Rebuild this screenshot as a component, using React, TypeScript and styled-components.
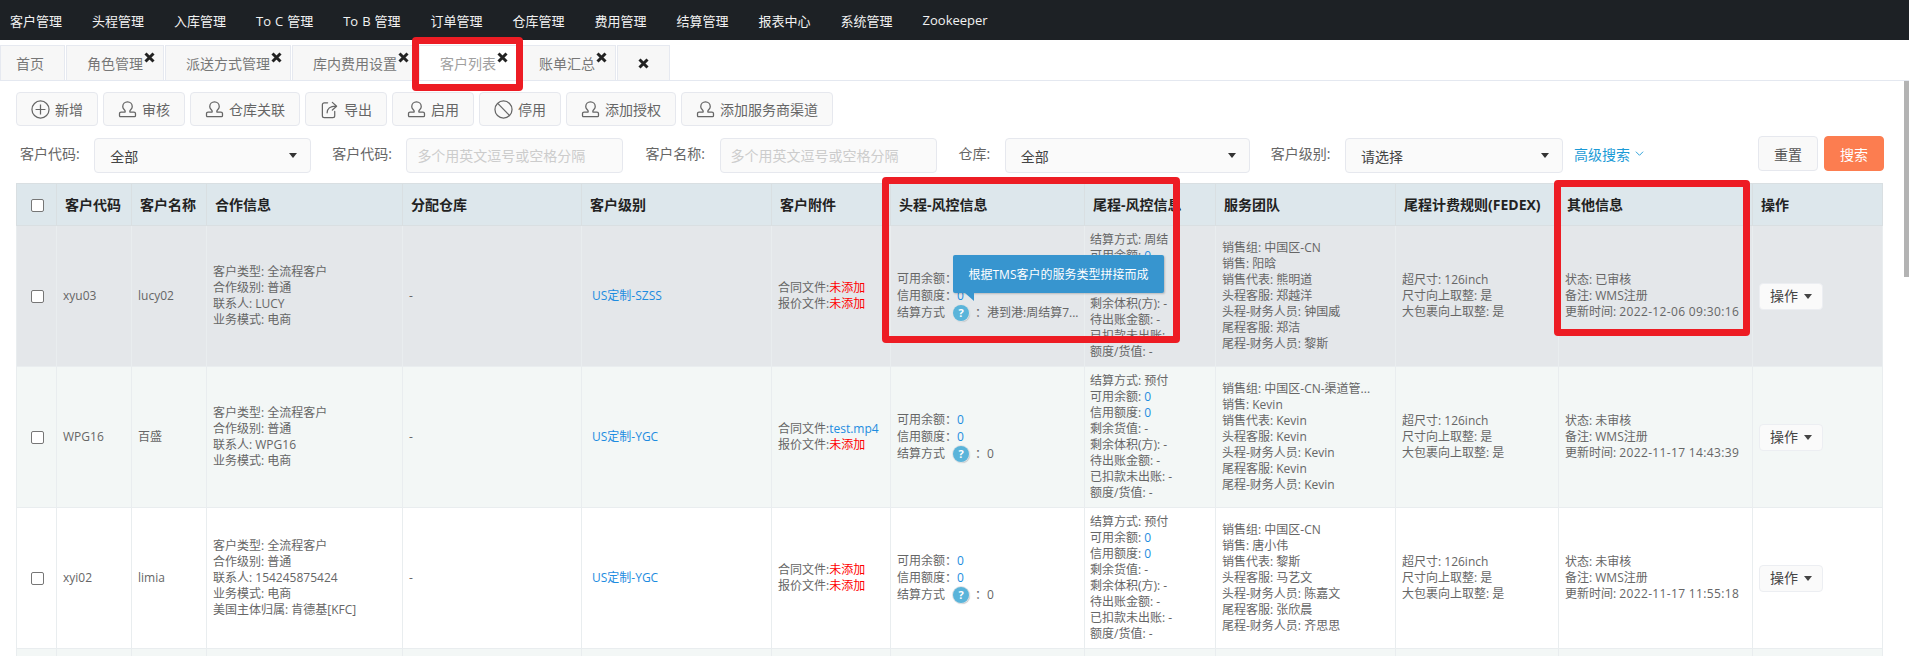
import React from "react";
import styled, { createGlobalStyle } from "styled-components";

const Global = createGlobalStyle`
  html, body { margin: 0; padding: 0; background: #fff; overflow: hidden; }
  body { font-family: "Open Sans", "Noto Sans CJK SC", sans-serif; color: #666; }
  * { box-sizing: border-box; }
`;

const Page = styled.div`
  position: relative;
  width: 1909px;
  height: 656px;
  overflow: hidden;
`;

const TopBar = styled.nav`
  display: flex;
  align-items: center;
  gap: 30px;
  height: 40px;
  padding-left: 10px;
  background: #1d2125;
`;
const NavItem = styled.span`
  font-size: 13px;
  word-spacing: 0.6px;
  color: #f2f2f2;
  white-space: nowrap;
`;

const TabBar = styled.div`
  display: flex;
  gap: 1px;
  height: 41px;
  padding-top: 5px;
  border-bottom: 1px solid #e4e8f0;
`;
const Tab = styled.div<{ $active?: boolean; $first?: boolean; $blank?: boolean }>`
  position: relative;
  display: flex;
  align-items: center;
  justify-content: center;
  height: 35px;
  padding: ${(p) => (p.$first ? "0 20px 0 15px" : "0 20px")};
  width: ${(p) => (p.$blank ? "53px" : "auto")};
  font-size: 14px;
  color: ${(p) => (p.$active ? "#a0a0a0" : "#777")};
  background: ${(p) => (p.$active ? "#fff" : "#f7f7f7")};
  border: 1px solid #e6e9f0;
  border-bottom: 0;
  white-space: nowrap;
`;
const TabClose = styled.svg<{ $inline?: boolean }>`
  width: 11px;
  height: 11px;
  ${(p) => (p.$inline ? "" : "position: absolute; top: 6px; right: 8px;")}
`;

const Toolbar = styled.div`
  display: flex;
  gap: 5px;
  margin: 11px 0 0 16px;
`;
const ToolButton = styled.button`
  display: flex;
  align-items: center;
  gap: 5px;
  height: 34px;
  padding: 0 14px;
  font: inherit;
  font-size: 14px;
  color: #666;
  background: #f9f9f9;
  border: 1px solid #e6e8ee;
  border-radius: 4px;
  white-space: nowrap;
  svg { width: 19px; height: 19px; color: #666; flex: none; }
`;

const FilterRow = styled.div`
  display: flex;
  align-items: flex-start;
  height: 37px;
  margin: 10px 25px 0 20px;
`;
const FilterLabel = styled.label`
  height: 35px;
  margin: 2px 14.5px 0 0;
  font-size: 14px;
  line-height: 32px;
  color: #666;
  white-space: nowrap;
`;
const SelectBox = styled.div<{ $w: number }>`
  display: flex;
  align-items: center;
  justify-content: space-between;
  width: ${(p) => p.$w}px;
  height: 35px;
  margin: 2px 21px 0 0;
  padding: 0 13px 0 15px;
  font-size: 14px;
  color: #444;
  background: #fafafa;
  border: 1px solid #e6e8ee;
  border-radius: 4px;
`;
const Caret = styled.i`
  display: inline-block;
  width: 0;
  height: 0;
  border-left: 4px solid transparent;
  border-right: 4px solid transparent;
  border-top: 5px solid #333;
`;
const TextInput = styled.input`
  width: 217px;
  height: 35px;
  margin: 2px 22px 0 0;
  padding: 0 10px;
  font: inherit;
  font-size: 14px;
  background: #fafafa;
  border: 1px solid #e6e8ee;
  border-radius: 4px;
  &::placeholder { color: #ccc; opacity: 1; }
`;
const AdvancedLink = styled.a`
  display: flex;
  align-items: center;
  gap: 5px;
  height: 35px;
  margin: 0 0 0 -10px;
  font-size: 14px;
  color: #1b9ad6;
  white-space: nowrap;
  svg { width: 9px; height: 9px; }
`;
const ActionGroup = styled.div`
  display: flex;
  gap: 6px;
  margin-left: auto;
`;
const ActionButton = styled.button<{ $primary?: boolean }>`
  width: 60px;
  height: 35px;
  padding: 0;
  font: inherit;
  font-size: 14px;
  color: ${(p) => (p.$primary ? "#fff" : "#555")};
  background: ${(p) => (p.$primary ? "#fc7d50" : "#f9f9f9")};
  border: 1px solid ${(p) => (p.$primary ? "#fc7d50" : "#e6e8ee")};
  border-radius: 4px;
`;

const Grid = styled.table`
  width: 1866px;
  margin: 10px 0 0 16px;
  table-layout: fixed;
  border-collapse: collapse;
  font-size: 12px;
  line-height: 16px;
`;
const HeadCell = styled.th<{ $center?: boolean }>`
  height: 42px;
  padding: ${(p) => (p.$center ? "0" : "0 8px")};
  font-size: 14px;
  font-weight: 700;
  text-align: ${(p) => (p.$center ? "center" : "left")};
  color: #222;
  background: #dde7ec;
  border: 1px solid #d9dfe2;
  white-space: nowrap;
`;
const BodyRow = styled.tr<{ $bg: string }>`
  height: 141px;
  background: ${(p) => p.$bg};
`;
const BodyCell = styled.td<{ $pad?: number }>`
  padding: 0 0 0 ${(p) => p.$pad ?? 6}px;
  color: #666;
  border: 1px solid #e9edef;
  vertical-align: middle;
  white-space: nowrap;
  overflow: hidden;
`;
const CenterCell = styled(BodyCell)`
  padding: 0;
  text-align: center;
`;
const Check = styled.input.attrs({ type: "checkbox" })`
  appearance: none;
  display: inline-block;
  width: 13px;
  height: 13px;
  margin: 0 0 0 1px;
  background: #fff;
  border: 1px solid #767676;
  border-radius: 2px;
  vertical-align: middle;
`;
const Line = styled.div``;
const RiskLine = styled.div`
  display: flex;
  align-items: center;
  height: 16.6px;
`;
const Blue = styled.span`
  color: #1d8ce0;
`;
const Red = styled.span`
  color: #f00;
`;
const DateText = styled.span`
  letter-spacing: 0.35px;
`;
const Help = styled.span`
  display: inline-flex;
  align-items: center;
  justify-content: center;
  width: 16px;
  height: 16px;
  margin: 0 6px 0 8px;
  font-size: 11px;
  font-weight: 700;
  color: #fff;
  background: #5ab4da;
  border-radius: 50%;
  box-shadow: 0 0 0 1px #dfe3e6, 1px 1px 1px #b5b9bc;
`;
const OpButton = styled.button`
  display: inline-flex;
  align-items: center;
  gap: 6px;
  height: 27px;
  padding: 0 10px;
  font: inherit;
  font-size: 14px;
  color: #444;
  background: #fafafa;
  border: 1px solid #eceef2;
  border-radius: 4px;
  ${Caret} { border-top-color: #444; }
`;

const Tooltip = styled.div`
  position: absolute;
  left: 953px;
  top: 255px;
  width: 211px;
  height: 38px;
  font-size: 12px;
  line-height: 39px;
  text-align: center;
  color: #fff;
  background: #3795cf;
  border-radius: 2px;
  box-shadow: 1px 1px 2px rgba(0, 0, 0, 0.2);
  white-space: nowrap;
  &::after {
    content: "";
    position: absolute;
    left: 12px;
    top: 38px;
    border-top: 8px solid #3795cf;
    border-left: 9px solid transparent;
  }
`;
const Highlight = styled.div<{ $l: number; $t: number; $w: number; $h: number }>`
  position: absolute;
  left: ${(p) => p.$l}px;
  top: ${(p) => p.$t}px;
  width: ${(p) => p.$w}px;
  height: ${(p) => p.$h}px;
  border: 7px solid #ed1c24;
  border-radius: 4px;
`;
const ScrollThumb = styled.div`
  position: absolute;
  right: 0;
  top: 81px;
  width: 5px;
  height: 196px;
  background: #b3b3b3;
`;

const Stamp = () => (
  <svg viewBox="0 0 20 20" fill="none" stroke="currentColor" strokeWidth="1.35" strokeLinejoin="round">
    <path d="M7.5 12.7V11.5C7.5 10.5 5 9.5 5 7A5 5 0 0 1 15 7C15 9.5 12.5 10.5 12.5 11.5V12.7H16.8A1.6 1.6 0 0 1 18.4 14.3V16.6A1 1 0 0 1 17.4 17.6H2.6A1 1 0 0 1 1.6 16.6V14.3A1.6 1.6 0 0 1 3.2 12.7Z" />
  </svg>
);
const PlusCircle = () => (
  <svg viewBox="0 0 20 20" fill="none" stroke="currentColor" strokeWidth="1.3">
    <circle cx="10" cy="10" r="9" />
    <path d="M4.8 10H15.2M10 4.8V15.2" />
  </svg>
);
const BanCircle = () => (
  <svg viewBox="0 0 20 20" fill="none" stroke="currentColor" strokeWidth="1.3">
    <circle cx="10" cy="10" r="9" />
    <path d="M4.2 3.8L16.2 16.2" />
  </svg>
);
const ExportIcon = () => (
  <svg viewBox="0 0 20 20" fill="none" stroke="currentColor" strokeWidth="1.3" strokeLinecap="round" strokeLinejoin="round">
    <path d="M8 3H4.5A2 2 0 0 0 2.5 5V16.5A2 2 0 0 0 4.5 18.5H13.5A2 2 0 0 0 15.5 16.5V12" />
    <path d="M7.5 13.5C7.5 9.5 10.5 6.5 16.5 6.5M13 2.5L17.5 6.5L13 10.5" />
  </svg>
);
const X = ({ inline }: { inline?: boolean }) => (
  <TabClose $inline={inline} viewBox="0 0 11 11" stroke="#222" strokeWidth="3">
    <path d="M1.5 1.5L9.5 9.5M9.5 1.5L1.5 9.5" />
  </TabClose>
);

const navItems = ["客户管理", "头程管理", "入库管理", "To C 管理", "To B 管理", "订单管理", "仓库管理", "费用管理", "结算管理", "报表中心", "系统管理", "Zookeeper"];
const tabs = ["角色管理", "派送方式管理", "库内费用设置", "客户列表", "账单汇总"];
const tools: { label: string; icon: React.ReactNode }[] = [
  { label: "新增", icon: <PlusCircle /> },
  { label: "审核", icon: <Stamp /> },
  { label: "仓库关联", icon: <Stamp /> },
  { label: "导出", icon: <ExportIcon /> },
  { label: "启用", icon: <Stamp /> },
  { label: "停用", icon: <BanCircle /> },
  { label: "添加授权", icon: <Stamp /> },
  { label: "添加服务商渠道", icon: <Stamp /> },
];
const columns: [string, number][] = [
  ["", 40], ["客户代码", 75], ["客户名称", 75], ["合作信息", 196], ["分配仓库", 179], ["客户级别", 190],
  ["客户附件", 119], ["头程-风控信息", 194], ["尾程-风控信息", 131], ["服务团队", 180],
  ["尾程计费规则(FEDEX)", 163], ["其他信息", 194], ["操作", 130],
];

type Row = {
  bg: string; code: string; name: string; info: string[]; level: string; contract?: string;
  settle: string; tailSettle: string; team: string[]; status: string; updated: string;
};
const rows: Row[] = [
  {
    bg: "#e4e7ea", code: "xyu03", name: "lucy02",
    info: ["客户类型: 全流程客户", "合作级别: 普通", "联系人: LUCY", "业务模式: 电商"],
    level: "US定制-SZSS", settle: "港到港:周结算7...", tailSettle: "周结",
    team: ["销售组: 中国区-CN", "销售: 阳晗", "销售代表: 熊明道", "头程客服: 郑越洋", "头程-财务人员: 钟国威", "尾程客服: 郑洁", "尾程-财务人员: 黎斯"],
    status: "已审核", updated: "2022-12-06 09:30:16",
  },
  {
    bg: "#f3f7f6", code: "WPG16", name: "百盛",
    info: ["客户类型: 全流程客户", "合作级别: 普通", "联系人: WPG16", "业务模式: 电商"],
    level: "US定制-YGC", contract: "test.mp4", settle: "0", tailSettle: "预付",
    team: ["销售组: 中国区-CN-渠道管...", "销售: Kevin", "销售代表: Kevin", "头程客服: Kevin", "头程-财务人员: Kevin", "尾程客服: Kevin", "尾程-财务人员: Kevin"],
    status: "未审核", updated: "2022-11-17 14:43:39",
  },
  {
    bg: "#ffffff", code: "xyi02", name: "limia",
    info: ["客户类型: 全流程客户", "合作级别: 普通", "联系人: 154245875424", "业务模式: 电商", "美国主体归属: 肯德基[KFC]"],
    level: "US定制-YGC", settle: "0", tailSettle: "预付",
    team: ["销售组: 中国区-CN", "销售: 唐小伟", "销售代表: 黎斯", "头程客服: 马艺文", "头程-财务人员: 陈嘉文", "尾程客服: 张欣晨", "尾程-财务人员: 齐思思"],
    status: "未审核", updated: "2022-11-17 11:55:18",
  },
];

export default function App() {
  return (
    <Page>
      <Global />
      <TopBar>
        {navItems.map((n) => <NavItem key={n}>{n}</NavItem>)}
      </TopBar>
      <TabBar>
        <Tab $first>首页</Tab>
        {tabs.map((t) => (
          <Tab key={t} $active={t === "客户列表"}>{t}<X /></Tab>
        ))}
        <Tab $blank><X inline /></Tab>
      </TabBar>
      <Toolbar>
        {tools.map((t) => <ToolButton key={t.label}>{t.icon}{t.label}</ToolButton>)}
      </Toolbar>
      <FilterRow>
        <FilterLabel>客户代码:</FilterLabel>
        <SelectBox $w={217}>全部<Caret /></SelectBox>
        <FilterLabel>客户代码:</FilterLabel>
        <TextInput placeholder="多个用英文逗号或空格分隔" />
        <FilterLabel>客户名称:</FilterLabel>
        <TextInput placeholder="多个用英文逗号或空格分隔" />
        <FilterLabel>仓库:</FilterLabel>
        <SelectBox $w={245}>全部<Caret /></SelectBox>
        <FilterLabel>客户级别:</FilterLabel>
        <SelectBox $w={218}>请选择<Caret /></SelectBox>
        <AdvancedLink>
          高级搜索
          <svg viewBox="0 0 10 10" fill="none" stroke="currentColor" strokeWidth="1"><path d="M1 3L5 7L9 3" /></svg>
        </AdvancedLink>
        <ActionGroup>
          <ActionButton>重置</ActionButton>
          <ActionButton $primary>搜索</ActionButton>
        </ActionGroup>
      </FilterRow>
      <Grid>
        <colgroup>
          {columns.map(([name, w]) => <col key={name + w} width={w} />)}
        </colgroup>
        <thead>
          <tr>
            {columns.map(([name], i) => (
              <HeadCell key={name + i} $center={i === 0}>{i === 0 ? <Check /> : name}</HeadCell>
            ))}
          </tr>
        </thead>
        <tbody>
          {rows.map((r) => (
            <BodyRow key={r.code} $bg={r.bg}>
              <CenterCell><Check /></CenterCell>
              <BodyCell>{r.code}</BodyCell>
              <BodyCell>{r.name}</BodyCell>
              <BodyCell>{r.info.map((l) => <Line key={l}>{l}</Line>)}</BodyCell>
              <BodyCell>-</BodyCell>
              <BodyCell $pad={10}><Blue>{r.level}</Blue></BodyCell>
              <BodyCell>
                <Line>合同文件:{r.contract ? <Blue>{r.contract}</Blue> : <Red>未添加</Red>}</Line>
                <Line>报价文件:<Red>未添加</Red></Line>
              </BodyCell>
              <BodyCell>
                <RiskLine>可用余额：<Blue>0</Blue></RiskLine>
                <RiskLine>信用额度：<Blue>0</Blue></RiskLine>
                <RiskLine>结算方式<Help>?</Help>：{r.settle}</RiskLine>
              </BodyCell>
              <BodyCell $pad={5}>
                <Line>结算方式: {r.tailSettle}</Line>
                <Line>可用余额: <Blue>0</Blue></Line>
                <Line>信用额度: <Blue>0</Blue></Line>
                <Line>剩余货值: -</Line>
                <Line>剩余体积(方): -</Line>
                <Line>待出账金额: -</Line>
                <Line>已扣款未出账: -</Line>
                <Line>额度/货值: -</Line>
              </BodyCell>
              <BodyCell>{r.team.map((l) => <Line key={l}>{l}</Line>)}</BodyCell>
              <BodyCell>
                <Line>超尺寸: 126inch</Line>
                <Line>尺寸向上取整: 是</Line>
                <Line>大包裹向上取整: 是</Line>
              </BodyCell>
              <BodyCell>
                <Line>状态: {r.status}</Line>
                <Line>备注: WMS注册</Line>
                <Line>更新时间: <DateText>{r.updated}</DateText></Line>
              </BodyCell>
              <BodyCell><OpButton>操作<Caret /></OpButton></BodyCell>
            </BodyRow>
          ))}
          <BodyRow $bg="#f3f7f6">
            {columns.map(([name], i) => <BodyCell key={name + i} />)}
          </BodyRow>
        </tbody>
      </Grid>
      <Tooltip>根据TMS客户的服务类型拼接而成</Tooltip>
      <Highlight $l={412} $t={37} $w={111} $h={54} />
      <Highlight $l={882} $t={177} $w={298} $h={166} />
      <Highlight $l={1554} $t={180} $w={196} $h={156} />
      <ScrollThumb />
    </Page>
  );
}
